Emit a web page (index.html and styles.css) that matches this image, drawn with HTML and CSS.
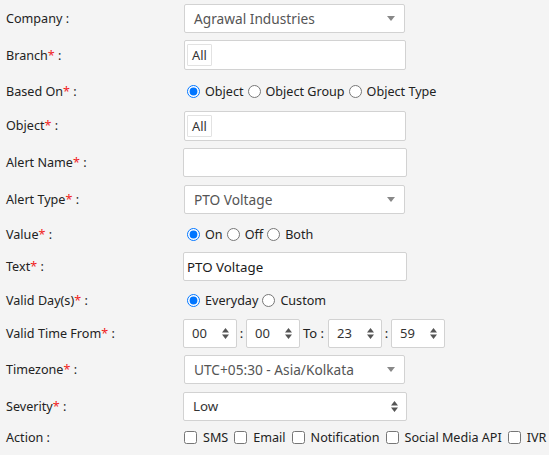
FILE: index.html
```html
<!DOCTYPE html>
<html>
<head>
<meta charset="utf-8">
<link rel="stylesheet" href="styles.css">
</head>
<body>
<form class="form">
  <div class="row r1">
    <div class="lbl">Company :</div>
    <div class="ctl"><div class="sel"><span>Agrawal Industries</span><svg class="caret" width="8" height="5" viewBox="0 0 8 5"><path d="M0 0h8L4 5z" fill="#888"/></svg></div></div>
  </div>
  <div class="row r2">
    <div class="lbl">Branch<span class="req">*</span> :</div>
    <div class="ctl"><div class="multi"><span class="tag">All</span></div></div>
  </div>
  <div class="row r3">
    <div class="lbl">Based On<span class="req">*</span> :</div>
    <div class="ctl opts">
      <label class="opt"><input type="radio" name="based" checked>Object</label>
      <label class="opt"><input type="radio" name="based">Object Group</label>
      <label class="opt"><input type="radio" name="based">Object Type</label>
    </div>
  </div>
  <div class="row r4">
    <div class="lbl">Object<span class="req">*</span> :</div>
    <div class="ctl"><div class="multi"><span class="tag">All</span></div></div>
  </div>
  <div class="row r5">
    <div class="lbl">Alert Name<span class="req">*</span> :</div>
    <div class="ctl"><div class="txt"></div></div>
  </div>
  <div class="row r6">
    <div class="lbl">Alert Type<span class="req">*</span> :</div>
    <div class="ctl"><div class="sel"><span>PTO Voltage</span><svg class="caret" width="8" height="5" viewBox="0 0 8 5"><path d="M0 0h8L4 5z" fill="#888"/></svg></div></div>
  </div>
  <div class="row r7">
    <div class="lbl">Value<span class="req">*</span> :</div>
    <div class="ctl opts">
      <label class="opt"><input type="radio" name="val" checked>On</label>
      <label class="opt"><input type="radio" name="val">Off</label>
      <label class="opt"><input type="radio" name="val">Both</label>
    </div>
  </div>
  <div class="row r8">
    <div class="lbl">Text<span class="req">*</span> :</div>
    <div class="ctl"><div class="txt dark">PTO Voltage</div></div>
  </div>
  <div class="row r9">
    <div class="lbl">Valid Day(s)<span class="req">*</span> :</div>
    <div class="ctl opts">
      <label class="opt"><input type="radio" name="day" checked>Everyday</label>
      <label class="opt"><input type="radio" name="day">Custom</label>
    </div>
  </div>
  <div class="row r10">
    <div class="lbl">Valid Time From<span class="req">*</span> :</div>
    <div class="ctl times">
      <div class="num"><span>00</span><svg class="spin" width="7" height="11" viewBox="0 0 7 11"><path d="M0 4.5L3.5 0 7 4.5zM0 6.5h7L3.5 11z" fill="#555"/></svg></div>
      <span class="sep">:</span>
      <div class="num"><span>00</span><svg class="spin" width="7" height="11" viewBox="0 0 7 11"><path d="M0 4.5L3.5 0 7 4.5zM0 6.5h7L3.5 11z" fill="#555"/></svg></div>
      <span class="to">To :</span>
      <div class="num"><span>23</span><svg class="spin" width="7" height="11" viewBox="0 0 7 11"><path d="M0 4.5L3.5 0 7 4.5zM0 6.5h7L3.5 11z" fill="#555"/></svg></div>
      <span class="sep">:</span>
      <div class="num"><span>59</span><svg class="spin" width="7" height="11" viewBox="0 0 7 11"><path d="M0 4.5L3.5 0 7 4.5zM0 6.5h7L3.5 11z" fill="#555"/></svg></div>
    </div>
  </div>
  <div class="row r11">
    <div class="lbl">Timezone<span class="req">*</span> :</div>
    <div class="ctl"><div class="sel"><span>UTC+05:30 - Asia/Kolkata</span><svg class="caret" width="8" height="5" viewBox="0 0 8 5"><path d="M0 0h8L4 5z" fill="#888"/></svg></div></div>
  </div>
  <div class="row r12">
    <div class="lbl">Severity<span class="req">*</span> :</div>
    <div class="ctl"><div class="nsel"><span>Low</span><svg class="spin" width="7" height="11" viewBox="0 0 7 11"><path d="M0 4.5L3.5 0 7 4.5zM0 6.5h7L3.5 11z" fill="#555"/></svg></div></div>
  </div>
  <div class="row r13">
    <div class="lbl">Action :</div>
    <div class="ctl opts cbs">
      <label class="opt"><input type="checkbox">SMS</label>
      <label class="opt"><input type="checkbox">Email</label>
      <label class="opt"><input type="checkbox">Notification</label>
      <label class="opt"><input type="checkbox">Social Media API</label>
      <label class="opt"><input type="checkbox">IVR</label>
    </div>
  </div>
</form>
</body>
</html>
```

FILE: styles.css
```css
html, body {
  margin: 0;
  padding: 0;
  background: #f4f4f4;
}
body {
  font-family: "Noto Sans", "Open Sans", "Liberation Sans", sans-serif;
  font-size: 12.6px;
  color: #222;
  width: 549px;
  height: 455px;
  overflow: hidden;
}
.form {
  display: flex;
  flex-direction: column;
  padding-left: 6px;
}
.row {
  display: flex;
  align-items: center;
}
.r1 { height: 36px; }
.r2 { height: 38px; }
.r3 { height: 35px; }
.r4 { height: 33px; }
.r5 { height: 41px; }
.r6 { height: 32px; }
.r7 { height: 38px; }
.r8 { height: 27px; }
.r9 { height: 40px; }
.r10 { height: 26px; }
.r11 { height: 46px; }
.r12 { height: 28px; }
.r13 { height: 34px; }

.lbl {
  width: 177px;
  flex: none;
  white-space: nowrap;
}
.req {
  color: #f01c1c;
}
.ctl {
  flex: none;
}
.sel, .multi, .txt, .nsel, .num {
  box-sizing: border-box;
  background: #fff;
  border: 1px solid #d2d2d2;
  border-radius: 2px;
  display: flex;
  align-items: center;
}
.sel {
  margin-left: 1px;
  width: 221px;
  height: 29px;
  padding: 0 9px 0 9px;
  justify-content: space-between;
  color: #555;
  font-size: 13.7px;
}
.caret { flex: none; }
.multi {
  margin-left: 1px;
  width: 222px;
  height: 30px;
  padding: 3px 2px;
  align-items: stretch;
}
.tag {
  border: 1px solid #e2e2e2;
  border-radius: 1px;
  padding: 0 4px;
  display: flex;
  align-items: center;
  font-size: 12.8px;
  color: #333;
}
.txt {
  width: 224px;
  height: 29px;
  padding: 0 3px;
  font-size: 13.3px;
  color: #1a1a1a;
}
.nsel {
  width: 224px;
  height: 29px;
  padding: 0 8px 0 9px;
  justify-content: space-between;
  color: #333;
  font-size: 13.3px;
}
.opts {
  display: flex;
  align-items: center;
}
.opt {
  display: flex;
  align-items: center;
}
.opt input {
  margin: 0 5px 0 4px;
  width: 13px;
  height: 13px;
}
.cbs {
  margin-left: 1px;
}
.cbs .opt {
  margin-right: 6px;
}
.cbs .opt input {
  margin: 0 6px 0 0;
  width: 13px;
  height: 13px;
}
.times {
  display: flex;
  align-items: center;
  font-size: 13px;
}
.num {
  width: 54px;
  height: 29px;
  padding: 0 7px 0 8px;
  justify-content: space-between;
  color: #333;
}
.sep {
  width: 9px;
  text-align: center;
}
.to {
  padding: 0 4px 0 3px;
}
```
